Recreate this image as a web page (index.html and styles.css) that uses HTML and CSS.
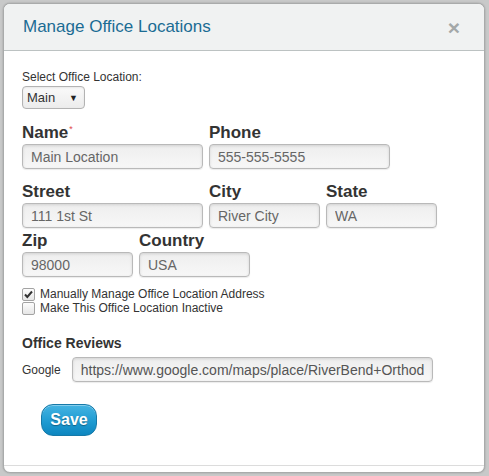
FILE: index.html
```html
<!DOCTYPE html>
<html lang="en">
<head>
  <meta charset="UTF-8">
  <meta name="viewport" content="width=device-width, initial-scale=1.0">
  <title>Manage Office Locations</title>
  <link rel="stylesheet" href="styles.css">
</head>
<body>
  <div class="modal">
    <div class="modal-header">
      <h3 class="modal-title">Manage Office Locations</h3>
      <span class="close">&times;</span>
    </div>
    <div class="modal-body">
      <div class="select-label">Select Office Location:</div>
      <div class="select-box">
        <span>Main</span>
        <span class="arrow">&#9660;</span>
      </div>

      <div class="row row-name">
        <div class="field">
          <label>Name<sup class="req">*</sup></label>
          <input class="inp w-lg" type="text" value="Main Location">
        </div>
        <div class="field">
          <label>Phone</label>
          <input class="inp w-lg" type="text" value="555-555-5555">
        </div>
      </div>

      <div class="row row-street">
        <div class="field">
          <label>Street</label>
          <input class="inp w-lg" type="text" value="111 1st St">
        </div>
        <div class="field">
          <label>City</label>
          <input class="inp w-md" type="text" value="River City">
        </div>
        <div class="field">
          <label>State</label>
          <input class="inp w-md" type="text" value="WA">
        </div>
      </div>

      <div class="row row-zip">
        <div class="field">
          <label>Zip</label>
          <input class="inp w-md" type="text" value="98000">
        </div>
        <div class="field">
          <label>Country</label>
          <input class="inp w-md" type="text" value="USA">
        </div>
      </div>

      <div class="checks">
        <div class="check">
          <span class="box">
            <svg width="11" height="11" viewBox="0 0 11 11"><path d="M2 5.5 L4.3 8 L9 2.5" fill="none" stroke="#333" stroke-width="2"/></svg>
          </span>
          <span>Manually Manage Office Location Address</span>
        </div>
        <div class="check">
          <span class="box"></span>
          <span>Make This Office Location Inactive</span>
        </div>
      </div>

      <h4 class="reviews-title">Office Reviews</h4>
      <div class="review-row">
        <span class="review-label">Google</span>
        <input class="inp url" type="text" value="https://www.google.com/maps/place/RiverBend+Orthodontics">
      </div>

      <button class="btn-save">Save</button>
    </div>
    <div class="modal-footer"></div>
  </div>
</body>
</html>
```

FILE: styles.css
```css
html, body {
    margin: 0;
    padding: 0;
}
body {
    background: #c8c9c9;
    font-family: Arial, "Liberation Sans", sans-serif;
    color: #333;
    padding: 3px 4px 3px 3px;
}
.modal {
    width: 480px;
    height: 468px;
    background: #fff;
    border: 1px solid #a9abab;
    border-radius: 7px;
    box-shadow: 0 0 2px rgba(0, 0, 0, .25);
    display: flex;
    flex-direction: column;
    overflow: hidden;
}
.modal-header {
    height: 46px;
    background: #f0f2f2;
    border-bottom: 1px solid #bcc2c2;
    display: flex;
    align-items: center;
    justify-content: space-between;
    padding: 0 24px 0 19px;
}
.modal-title {
    margin: 0;
    font-size: 17px;
    font-weight: normal;
    color: #1b6c94;
    padding-bottom: 1px;
}
.close {
    font-size: 21px;
    font-weight: bold;
    color: #a3a8a8;
    line-height: 1;
}
.modal-body {
    flex: 1;
    padding: 19px 18px 0;
}
.select-label {
    font-size: 12px;
    line-height: 15px;
}
.select-box {
    margin-top: 1px;
    width: 63px;
    height: 23px;
    box-sizing: border-box;
    border: 1px solid #b3b3b3;
    border-radius: 4px;
    background: linear-gradient(#fafafa, #ececec);
    box-shadow: inset 0 1px 2px rgba(0, 0, 0, .08);
    display: flex;
    align-items: center;
    justify-content: space-between;
    padding: 0 6px 0 4px;
    font-size: 13px;
    color: #333;
}
.select-box .arrow {
    font-size: 9px;
    color: #222;
}
.row {
    display: flex;
    gap: 6px;
}
.row-name {
    margin-top: 12px;
}
.row-street {
    margin-top: 11px;
}
.row-zip {
    margin-top: 1px;
}
.field {
    display: flex;
    flex-direction: column;
}
.field label {
    font-size: 17px;
    font-weight: bold;
    line-height: 20px;
    padding-top: 2px;
    margin-bottom: 1px;
    color: #333;
}
.req {
    color: #e04848;
    font-size: 9px;
    font-weight: normal;
    vertical-align: top;
    position: relative;
    top: -4px;
    margin-left: 1px;
}
.inp {
    box-sizing: border-box;
    height: 25px;
    border: 1px solid #b9b9b9;
    border-radius: 4px;
    background: linear-gradient(#eeeeee, #f7f7f7);
    box-shadow: inset 0 1px 3px rgba(0, 0, 0, .12), 0 1px 1px rgba(0, 0, 0, .08);
    padding: 0 8px;
    font-family: Arial, "Liberation Sans", sans-serif;
    font-size: 14px;
    color: #666;
    outline: none;
}
.w-lg {
    width: 181px;
}
.w-md {
    width: 111px;
}
.checks {
    margin-top: 10px;
    font-size: 12px;
}
.check {
    display: flex;
    align-items: center;
    gap: 5px;
    line-height: 14px;
    height: 14px;
}
.box {
    width: 13px;
    height: 13px;
    box-sizing: border-box;
    border: 1px solid #a3a3a3;
    border-radius: 2px;
    background: linear-gradient(#fdfdfd, #e6e6e6);
    display: flex;
    align-items: center;
    justify-content: center;
}
.reviews-title {
    margin: 20px 0 0;
    font-size: 14px;
    line-height: 17px;
}
.review-row {
    display: flex;
    align-items: center;
    gap: 11px;
    margin-top: 5px;
    font-size: 12px;
}
.url {
    width: 361px;
    font-size: 14px;
    color: #555;
}
.btn-save {
    display: block;
    margin: 22px 0 0 19px;
    width: 56px;
    height: 32px;
    border: 1px solid #1679a8;
    border-radius: 12px;
    background: linear-gradient(#45b4e2, #1f9bd2 55%, #0d86bf);
    box-shadow: inset 0 1px 0 rgba(255, 255, 255, .35);
    color: #fff;
    font-family: Arial, "Liberation Sans", sans-serif;
    font-size: 16px;
    font-weight: bold;
    text-shadow: 0 1px 1px rgba(0, 0, 0, .35);
    padding: 0;
}
.modal-footer {
    height: 6px;
    border-top: 1px solid #dcdcdc;
}
```
